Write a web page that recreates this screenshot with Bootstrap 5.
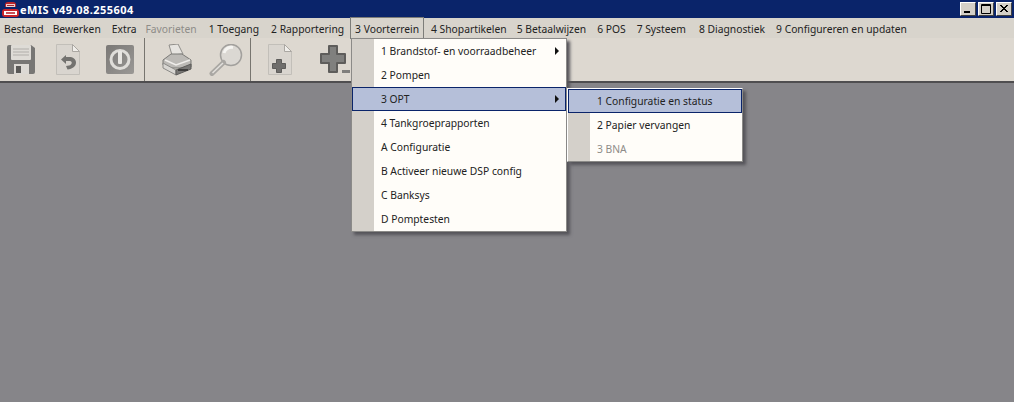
<!DOCTYPE html>
<html lang="nl">
<head>
<meta charset="utf-8">
<title>eMIS</title>
<link rel="stylesheet" href="https://cdn.jsdelivr.net/npm/bootstrap@5.3.0/dist/css/bootstrap.min.css">
<style>
html,body{height:402px;overflow:hidden}
body{background:#868589;font-family:"Noto Sans","DejaVu Sans",sans-serif;font-size:10.3px;color:#222;position:relative}
.titlebar{height:18px;background:#0a246a;color:#fff;font:bold 11px "Noto Sans",sans-serif;letter-spacing:.45px;padding-left:2px}
.app-logo{width:17px;height:15px;margin-right:1px;flex:none}
.winbtn{width:16px;height:14px;background:#d4d0c8;border:1px solid;border-color:#fff #404040 #404040 #fff;margin-right:2px}
.winbtn svg{display:block}
.menubar{height:20px;background:#d8d4cc;padding-left:4px;line-height:22px;white-space:nowrap}
.menubar span{display:block;margin-left:11px}
.menubar span:nth-child(1){margin-left:0}
.menubar span:nth-child(2),.menubar span:nth-child(4){margin-left:9px}
.menubar span:nth-child(5),.menubar span:nth-child(6),.menubar span:nth-child(8){margin-left:12px}
.menubar span:nth-child(9){margin-left:10px}
.menubar span:nth-child(12){margin-left:13px}
.menubar .off{color:#8e8c88}
.menubar span.open{outline:1px solid #7d7d79;padding:0 4px;margin:0 -4px 0 7px;height:20px;background:#d8d4cc}
.toolbar{height:45px;background:#ddd8d0;border-bottom:2px solid #4f4e50}
.tool{width:50px;height:43px}
.tool-a{margin-left:-3px}
.tool-b{margin-left:-1px}
.tool-c{margin-left:5px}
.tool-d{margin-left:-4px}
.tool-e{margin-left:4px}
.tsep{width:1px;height:43px;background:#77756f}
.grp1{width:144px}
.grp2{width:105px;padding-left:7px}
.grp3{padding-left:8px}
.popmenu{position:absolute;background:#fffdf9;border:1px solid #8b8a88;box-shadow:3px 3px 3px #55545a;background-image:linear-gradient(#d4d0ca,#d4d0ca);background-repeat:no-repeat;background-size:22px 100%}
.menu-main{left:351px;top:38px;width:216px;height:194px}
.menu-sub{left:567px;top:88px;width:176px;height:74px;border-color:#fff #8b8a88 #8b8a88 #fff}
.mitem{height:24px;line-height:24px;position:relative;padding-left:29px;white-space:nowrap}
.mitem.cur{background:#b5bfd9;outline:1px solid #0a246a;outline-offset:-1px}
.mitem.dis{color:#8e8c88}
.menu-sub .mitem{line-height:25px}
.mitem .arrow{position:absolute;right:7px;top:8px;width:0;height:0;border-left:4px solid #111;border-top:4px solid transparent;border-bottom:4px solid transparent}
</style>
</head>
<body>
<div class="titlebar d-flex align-items-center">
  <svg class="app-logo" viewBox="0 0 17 15"><path d="M3 3q0-3 3-3h5q3 0 3 3v2H3z" fill="#b8242a"/><rect x="4" y="2" width="9" height="3" fill="#f1cfcf"/><rect x="5" y="3" width="7" height="1" fill="#a5262b"/><rect x="0" y="7" width="17" height="8" rx="3" fill="#c9242a"/><rect x="2" y="9" width="13" height="4" fill="#fff"/><rect x="4" y="10" width="9" height="2" fill="#c9525a"/></svg>
  <span class="flex-grow-1">eMIS v49.08.255604</span>
  <div class="winbtn"><svg width="14" height="12" viewBox="0 0 14 12"><rect x="3" y="8" width="6" height="2" fill="#000"/></svg></div>
  <div class="winbtn"><svg width="14" height="12" viewBox="0 0 14 12"><path d="M2.5 1.5h9v9h-9z M2 2.5h10" fill="none" stroke="#000"/></svg></div>
  <div class="winbtn"><svg width="14" height="12" viewBox="0 0 14 12"><path d="M3 2l7 7M4 2l7 7M10 2l-7 7M11 2l-7 7" stroke="#000"/></svg></div>
</div>
<nav class="menubar d-flex">
  <span>Bestand</span><span>Bewerken</span><span>Extra</span><span class="off">Favorieten</span><span>1 Toegang</span><span>2 Rapportering</span><span class="open">3 Voorterrein</span><span>4 Shopartikelen</span><span>5 Betaalwijzen</span><span>6 POS</span><span>7 Systeem</span><span>8 Diagnostiek</span><span>9 Configureren en updaten</span>
</nav>
<div class="toolbar d-flex">
  <div class="grp1 d-flex">
    <div class="tool d-flex align-items-center justify-content-center tool-a">
      <svg width="28" height="29" viewBox="0 0 28 29"><path d="M0 2a2 2 0 0 1 2-2h22l4 3v24a2 2 0 0 1-2 2H2a2 2 0 0 1-2-2z" fill="#777674"/><rect x="4" y="0" width="20" height="15" rx="1" fill="#dedbd6"/><path d="M6 4h16M6 7h16M6 10h16" stroke="#b1aeaa"/><rect x="7" y="19" width="15" height="10" fill="#dcd9d4"/><rect x="9" y="21" width="5" height="7" fill="#5a5957"/></svg>
    </div>
    <div class="tool d-flex align-items-center justify-content-center tool-b">
      <svg width="24" height="31" viewBox="0 0 24 31"><path d="M.5.500h16l7 7v23H.5z" fill="#d9d5cf" stroke="#c2bfb9"/><path d="M16.500.500v7h7z" fill="#f0eeea" stroke="#aaa7a2"/><path d="M10 11l-5 4.500 5 4.500v-3h4c2.500 0 2.500 4-1 4.500l-3 .500 1.500 3.500c5-.5 8.500-3 8.500-7 0-3.500-3-5.500-7-5.500h-3z" fill="#73726f"/></svg>
    </div>
    <div class="tool d-flex align-items-center justify-content-center tool-c">
      <svg width="28" height="29" viewBox="0 0 28 29"><defs><linearGradient id="pw" x1="0" y1="0" x2="1" y2="1"><stop offset="0" stop-color="#7a7876"/><stop offset="1" stop-color="#9a9895"/></linearGradient></defs><rect width="28" height="29" rx="2" fill="url(#pw)"/><circle cx="14" cy="14.500" r="9" fill="none" stroke="#dfddd9" stroke-width="3"/><rect x="12" y="6" width="4" height="13" rx="1" fill="#e8e6e2"/></svg>
    </div>
  </div>
  <div class="tsep"></div>
  <div class="grp2 d-flex">
    <div class="tool d-flex align-items-center justify-content-center">
      <svg width="30" height="32" viewBox="0 0 30 32"><path d="M7 1l9 -1 5 10-11 1z" fill="#e6e4e0" stroke="#908e8a"/><path d="M1 16l8-6h11l9 6v7l-4 1H6l-5-3z" fill="#bcbab6" stroke="#7b7a77"/><path d="M3 16l11 5 14-5" fill="none" stroke="#efedea" stroke-width="1.500"/><path d="M1 19l13 7v5L1 24z" fill="#d8d6d2" stroke="#8b8a87"/><path d="M14 26l15-6v5l-15 6z" fill="#787775" stroke="#5d5c5a"/><rect x="16" y="25" width="10" height="2" fill="#3f3e3d"/></svg>
    </div>
    <div class="tool d-flex align-items-center justify-content-center">
      <svg width="34" height="32" viewBox="0 0 34 32"><circle cx="22" cy="11" r="10.500" fill="#dbd8d3" stroke="#a2a09d" stroke-width="1.500"/><path d="M15 9a7.500 7.500 0 0 1 9-5.500" fill="none" stroke="#f5f4f1" stroke-width="3"/><path d="M14.500 18.500L3 29.500" stroke="#a9a7a3" stroke-width="5" stroke-linecap="round"/><path d="M14 19L3.500 29" stroke="#e2e0dc" stroke-width="1.500"/></svg>
    </div>
  </div>
  <div class="tsep"></div>
  <div class="grp3 d-flex">
    <div class="tool d-flex align-items-center justify-content-center tool-d">
      <svg width="24" height="31" viewBox="0 0 24 31"><path d="M.5.500h16l7 7v23H.5z" fill="#d9d5cf" stroke="#c2bfb9"/><path d="M16.500.500v7h7z" fill="#f0eeea" stroke="#aaa7a2"/><path d="M8.500 15.500h5v4h4v5h-4v4h-5v-4h-4v-5h4z" fill="#6f6e6c" stroke="#5d5c5a" stroke-linejoin="round"/></svg>
    </div>
    <div class="tool d-flex align-items-center justify-content-center tool-e">
      <svg width="31" height="29" viewBox="0 0 31 29"><path d="M10 1h8v8h8v9h-8v9h-8v-9H2V9h8z" fill="#80807e" stroke="#5e5d5b" stroke-width="2" stroke-linejoin="round"/><rect x="23" y="25" width="8" height="3" fill="#7f7e7c"/></svg>
    </div>
  </div>
</div>
<div class="popmenu menu-main">
  <div class="mitem">1 Brandstof- en voorraadbeheer<i class="arrow"></i></div>
  <div class="mitem">2 Pompen</div>
  <div class="mitem cur">3 OPT<i class="arrow"></i></div>
  <div class="mitem">4 Tankgroeprapporten</div>
  <div class="mitem">A Configuratie</div>
  <div class="mitem">B Activeer nieuwe DSP config</div>
  <div class="mitem">C Banksys</div>
  <div class="mitem">D Pomptesten</div>
</div>
<div class="popmenu menu-sub">
  <div class="mitem cur">1 Configuratie en status</div>
  <div class="mitem">2 Papier vervangen</div>
  <div class="mitem dis">3 BNA</div>
</div>
<script src="https://cdn.jsdelivr.net/npm/bootstrap@5.3.0/dist/js/bootstrap.bundle.min.js"></script>
</body>
</html>
